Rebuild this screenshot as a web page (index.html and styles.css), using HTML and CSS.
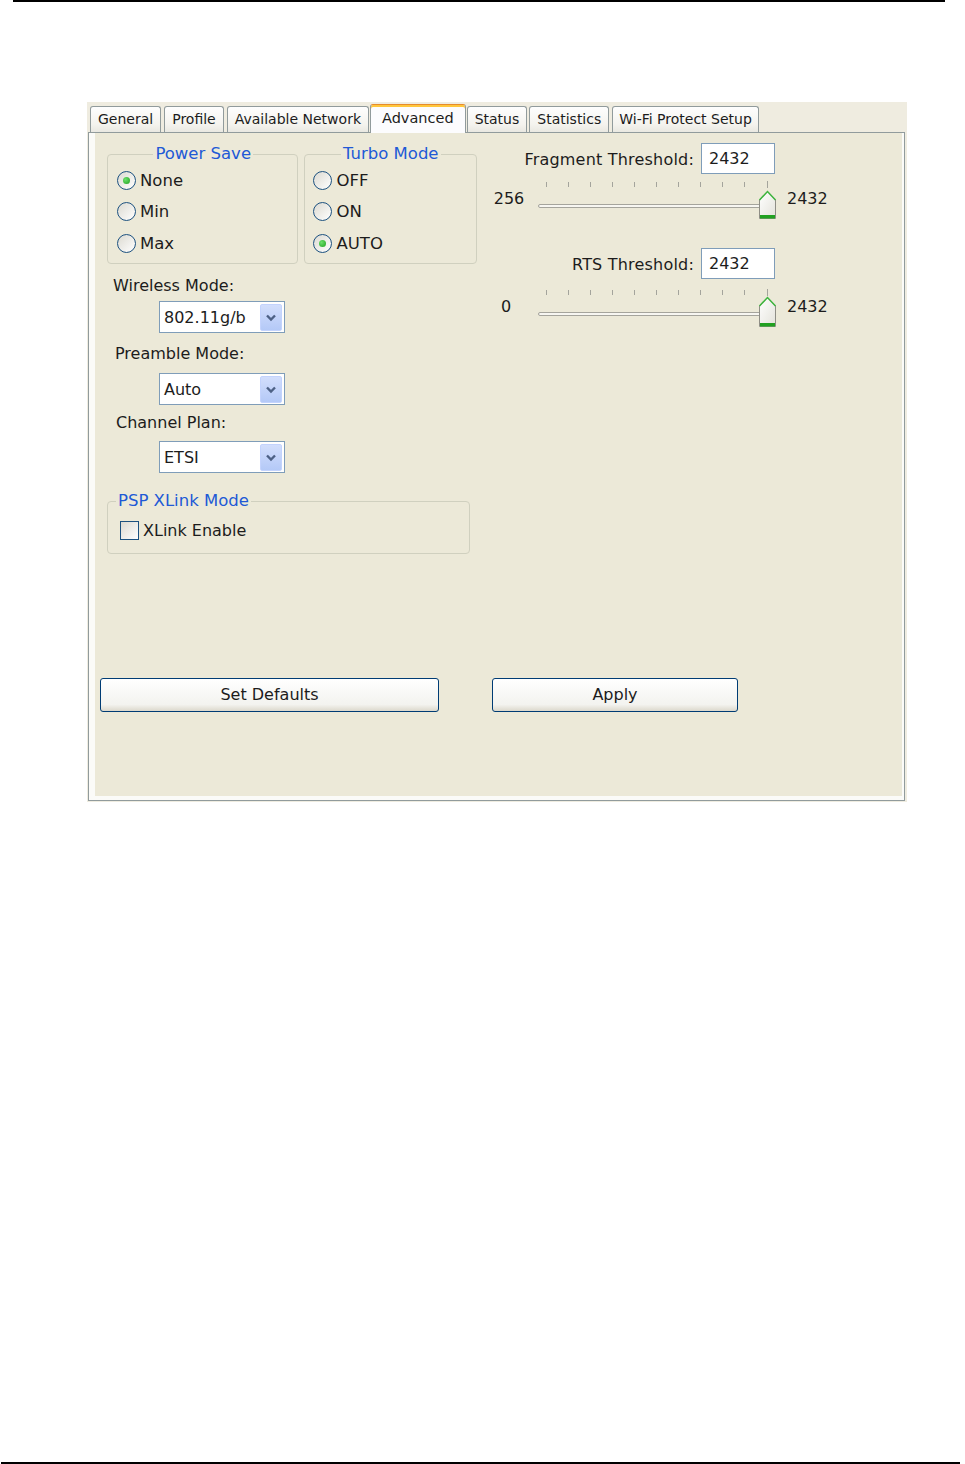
FILE: index.html
```html
<!DOCTYPE html>
<html lang="en">
<head>
  <meta charset="UTF-8" />
  <title>Advanced Settings</title>
  <link rel="stylesheet" href="styles.css">
</head>
<body>

  <div class="rule rule-top"></div>

  <div class="dialog">
    <div class="tabs">
      <div class="tab">General</div>
      <div class="tab">Profile</div>
      <div class="tab">Available Network</div>
      <div class="tab tab-active">Advanced</div>
      <div class="tab">Status</div>
      <div class="tab">Statistics</div>
      <div class="tab">Wi-Fi Protect Setup</div>
    </div>

    <div class="panel">
      <div class="panel-body">
        <div class="columns">

          <!-- left side: radio groups and drop-downs -->
          <div class="col-left">
            <div class="groups">
              <fieldset class="group group-power">
                <legend>Power Save</legend>
                <div class="radio"><span class="radio-box checked"></span>None</div>
                <div class="radio"><span class="radio-box"></span>Min</div>
                <div class="radio"><span class="radio-box"></span>Max</div>
              </fieldset>
              <fieldset class="group group-turbo">
                <legend>Turbo Mode</legend>
                <div class="radio"><span class="radio-box"></span>OFF</div>
                <div class="radio"><span class="radio-box"></span>ON</div>
                <div class="radio"><span class="radio-box checked"></span>AUTO</div>
              </fieldset>
            </div>

            <div class="field-label label-wireless">Wireless Mode:</div>
            <div class="select select-first">
              <span class="select-value">802.11g/b</span>
              <span class="select-btn">
                <svg width="22" height="27" viewBox="0 0 22 27"><path d="M7 11.5l4 4 4-4" fill="none" stroke="#4d6185" stroke-width="2.4"/></svg>
              </span>
            </div>

            <div class="field-label label-preamble">Preamble Mode:</div>
            <div class="select select-second">
              <span class="select-value">Auto</span>
              <span class="select-btn">
                <svg width="22" height="27" viewBox="0 0 22 27"><path d="M7 11.5l4 4 4-4" fill="none" stroke="#4d6185" stroke-width="2.4"/></svg>
              </span>
            </div>

            <div class="field-label label-channel">Channel Plan:</div>
            <div class="select select-third">
              <span class="select-value">ETSI</span>
              <span class="select-btn">
                <svg width="22" height="27" viewBox="0 0 22 27"><path d="M7 11.5l4 4 4-4" fill="none" stroke="#4d6185" stroke-width="2.4"/></svg>
              </span>
            </div>

            <fieldset class="group group-psp">
              <legend>PSP XLink Mode</legend>
              <div class="check"><span class="check-box"></span>XLink Enable</div>
            </fieldset>
          </div>

          <!-- right side: thresholds -->
          <div class="col-right">
            <div class="threshold">
              <span class="threshold-label">Fragment Threshold:</span>
              <span class="textbox">2432</span>
            </div>
            <div class="slider-row slider-first">
              <span class="slider-min">256</span>
              <svg class="slider" width="242" height="40" viewBox="0 0 242 40">
                <defs>
                  <linearGradient id="thumbFill" x1="0" y1="0" x2="1" y2="1">
                    <stop offset="0" stop-color="#ffffff"/>
                    <stop offset="1" stop-color="#e3e2da"/>
                  </linearGradient>
                </defs>
                <g stroke="#a4a49c" stroke-width="1">
                  <path d="M10.5 2v5M32.5 2v5M54.5 2v5M76.5 2v5M98.5 2v5M120.5 2v5M142.5 2v5M164.5 2v5M186.5 2v5M208.5 2v5M231.5 1v7"/>
                </g>
                <rect x="2.5" y="24.5" width="229" height="3" rx="1.5" fill="#f7f6f1" stroke="#a5a49c"/>
                <path d="M223.5 20L231.5 11.5 239.5 20V38.5H223.5Z" fill="url(#thumbFill)" stroke="#8f8e86"/>
                <path d="M223.5 20L231.5 11.5 239.5 20" fill="none" stroke="#3eb63e" stroke-width="1.5"/>
                <rect x="224" y="35" width="15" height="3.5" fill="#21a121"/>
              </svg>
              <span class="slider-max">2432</span>
            </div>

            <div class="threshold threshold-rts">
              <span class="threshold-label">RTS Threshold:</span>
              <span class="textbox">2432</span>
            </div>
            <div class="slider-row slider-second">
              <span class="slider-min">0</span>
              <svg class="slider" width="242" height="40" viewBox="0 0 242 40">
                <g stroke="#a4a49c" stroke-width="1">
                  <path d="M10.5 2v5M32.5 2v5M54.5 2v5M76.5 2v5M98.5 2v5M120.5 2v5M142.5 2v5M164.5 2v5M186.5 2v5M208.5 2v5M231.5 1v7"/>
                </g>
                <rect x="2.5" y="24.5" width="229" height="3" rx="1.5" fill="#f7f6f1" stroke="#a5a49c"/>
                <path d="M223.5 18L231.5 9.5 239.5 18V38.5H223.5Z" fill="url(#thumbFill)" stroke="#8f8e86"/>
                <path d="M223.5 18L231.5 9.5 239.5 18" fill="none" stroke="#3eb63e" stroke-width="1.5"/>
                <rect x="224" y="35" width="15" height="3.5" fill="#21a121"/>
              </svg>
              <span class="slider-max">2432</span>
            </div>
          </div>
        </div>

        <div class="buttons">
          <div class="button btn-defaults">Set Defaults</div>
          <div class="button btn-apply">Apply</div>
        </div>
      </div>
    </div>
  </div>

  <div class="rule rule-bottom"></div>

</body>
</html>
```

FILE: styles.css
```css
body {
  margin: 0;
  width: 965px;
  height: 1464px;
  overflow: hidden;
  background: #fff;
  font-family: "DejaVu Sans", Verdana, sans-serif;
  font-size: 16px;
  color: #1c1c1c;
}

.rule {
  height: 2px;
  background: #000;
}

.rule-top {
  margin-left: 13px;
  width: 932px;
}

.rule-bottom {
  margin-top: 660px;
  margin-left: 1px;
  width: 959px;
}

/* dialog frame */
.dialog {
  margin-top: 100px;
  margin-left: 87px;
  width: 820px;
  height: 700px;
  background: #efece0;
}

.tabs {
  display: flex;
  align-items: flex-end;
  height: 30px;
  padding-left: 3px;
  gap: 2px;
}

.tab {
  height: 25px;
  line-height: 25px;
  padding: 0 7px;
  font-size: 14px;
  border: 1px solid #919b9c;
  border-bottom: none;
  border-radius: 3px 3px 0 0;
  background: linear-gradient(#fefefe, #f4f3ee 70%, #e9e8e1);
}

.tab:nth-child(2),
.tab:nth-child(3) {
  margin-left: 1px;
}

.tab:nth-child(7) {
  margin-left: 1px;
  padding: 0 6px;
}

.tab-active {
  position: relative;
  z-index: 1;
  height: 28px;
  line-height: 26px;
  margin: 0 -1px -1px -1px;
  padding: 0 11px;
  font-size: 14.5px;
  background: #fcfcfe;
  border-top: 1px solid #e68b2c;
  box-shadow: inset 0 2px 0 #ffc73c;
}

.panel {
  margin-left: 1px;
  border: 1px solid #919b9c;
  background: #fbfbf8;
  padding: 0 2px 4px 6px;
  width: 807px;
  height: 663px;
}

.panel-body {
  height: 100%;
  background: #ece9d8;
  padding-top: 10px;
  box-sizing: border-box;
}

.columns {
  display: flex;
  margin-left: 12px;
}

.col-left {
  width: 370px;
}

.col-right {
  width: 345px;
  margin-left: 13px;
}

/* group boxes */
.groups {
  display: flex;
  gap: 6px;
  margin-top: 1px;
}

.group {
  margin: 0;
  padding: 0 8px 4px 8px;
  border: 1px solid #d0d0bf;
  border-radius: 4px;
}

.group legend {
  margin: 0 auto;
  padding: 0 2px;
  line-height: 20px;
  font-size: 16.5px;
  color: #2159d6;
}

.group-power {
  width: 173px;
  padding-left: 9px;
}

.group-turbo {
  width: 155px;
}

.radio {
  display: flex;
  align-items: center;
  height: 32px;
  font-size: 16.5px;
}

.radio:first-of-type {
  height: 31px;
  align-items: flex-start;
  padding-top: 7px;
  box-sizing: border-box;
}

.radio-box {
  width: 17px;
  height: 17px;
  margin-right: 4px;
  border: 1px solid #1c5180;
  border-radius: 50%;
  background: linear-gradient(135deg, #dcdad1, #ffffff);
  display: flex;
  align-items: center;
  justify-content: center;
}

.radio-box.checked::after {
  content: "";
  width: 7px;
  height: 7px;
  border-radius: 50%;
  background: radial-gradient(circle at 35% 35%, #6be06b, #21a121);
}

/* drop-downs */
.field-label {
  line-height: 20px;
}

.label-wireless {
  margin-top: 12px;
  margin-left: 6px;
}

.label-preamble {
  margin-top: 11px;
  margin-left: 8px;
}

.label-channel {
  margin-top: 8px;
  margin-left: 9px;
}

.select {
  display: flex;
  align-items: center;
  justify-content: space-between;
  width: 126px;
  height: 32px;
  margin-left: 52px;
  padding: 0 2px 0 4px;
  box-sizing: border-box;
  border: 1px solid #7f9db9;
  background: #fff;
}

.select-first {
  margin-top: 5px;
}

.select-second {
  margin-top: 9px;
}

.select-third {
  margin-top: 8px;
}

.select-btn {
  width: 22px;
  height: 27px;
  border: 1px solid #c3d3fd;
  border-radius: 2px;
  background: linear-gradient(#d2defc, #b4c9f7);
  box-sizing: border-box;
  display: flex;
}

.select-btn svg {
  margin: -1px;
}

.group-psp {
  width: 363px;
  box-sizing: border-box;
  margin-top: 18px;
  padding: 0 12px 13px 12px;
}

.group-psp legend {
  margin: 0 0 0 -4px;
}

.check {
  display: flex;
  align-items: center;
  height: 20px;
  margin-top: 9px;
}

.check-box {
  width: 17px;
  height: 17px;
  margin-right: 4px;
  border: 1px solid #1c5180;
  background: linear-gradient(135deg, #dcdad1, #ffffff);
}

/* thresholds */
.threshold {
  display: flex;
  align-items: center;
  justify-content: flex-end;
  width: 285px;
  height: 31px;
}

.threshold-rts {
  margin-top: 28px;
}

.threshold-label {
  margin-right: 7px;
  padding-top: 2px;
  letter-spacing: 0.2px;
}

.textbox {
  width: 74px;
  height: 31px;
  line-height: 29px;
  padding-left: 7px;
  box-sizing: border-box;
  border: 1px solid #7f9db9;
  background: #fff;
}

.slider-row {
  display: flex;
  align-items: center;
  height: 40px;
}

.slider-first {
  margin-top: 6px;
}

.slider-second {
  margin-top: 9px;
}

.slider-min,
.slider-max {
  margin-top: -4px;
}

.slider-min {
  width: 38px;
  text-align: center;
}

.slider-second .slider-min {
  width: 32px;
  margin-right: 6px;
}

.slider {
  margin-left: 8px;
}

.slider-max {
  margin-left: 9px;
}

/* push buttons */
.buttons {
  display: flex;
  margin-top: 124px;
  margin-left: 5px;
  gap: 53px;
}

.button {
  height: 34px;
  line-height: 32px;
  text-align: center;
  box-sizing: border-box;
  border: 1px solid #003c74;
  border-radius: 3px;
  background: linear-gradient(#ffffff, #f3f3ef 80%, #dcd8cc);
}

.btn-defaults {
  width: 339px;
}

.btn-apply {
  width: 246px;
}
```
